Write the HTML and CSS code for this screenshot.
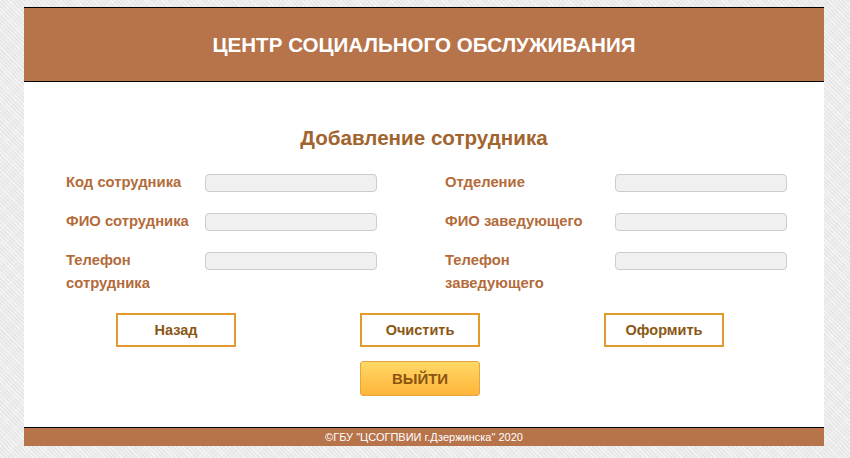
FILE: index.html
```html
<!DOCTYPE html>
<html lang="ru">
<head>
  <meta charset="UTF-8">
  <title>Добавление сотрудника</title>
  <link rel="stylesheet" href="styles.css">
</head>
<body>

<div class="page">
  <div class="header">ЦЕНТР СОЦИАЛЬНОГО ОБСЛУЖИВАНИЯ</div>

  <div class="content">
    <h2>Добавление сотрудника</h2>

    <form class="form" onsubmit="return false">
      <label for="code">Код сотрудника</label>
      <input type="text" id="code" />
      <label for="dept">Отделение</label>
      <input type="text" id="dept" />

      <label for="fio">ФИО сотрудника</label>
      <input type="text" id="fio" />
      <label for="head">ФИО заведующего</label>
      <input type="text" id="head" />

      <label for="phone">Телефон сотрудника</label>
      <input type="text" id="phone" />
      <label for="head-phone">Телефон заведующего</label>
      <input type="text" id="head-phone" />
    </form>

    <div class="buttons">
      <button class="btn">Назад</button>
      <button class="btn">Очистить</button>
      <button class="btn">Оформить</button>
      <button class="btn-exit">ВЫЙТИ</button>
    </div>
  </div>

  <div class="footer">©ГБУ "ЦСОГПВИИ г.Дзержинска" 2020</div>
</div>

</body>
</html>
```

FILE: styles.css
```css
body {
  margin: 0;
  font-family: Arial, "Liberation Sans", sans-serif;
  background-color: #ececec;
  background-image:
    repeating-linear-gradient(45deg, rgba(255,255,255,0.5) 0 1px, transparent 1px 3px),
    repeating-linear-gradient(-45deg, rgba(0,0,0,0.03) 0 1px, transparent 1px 2px);
}
.page {
  width: 800px;
  margin: 7px 0 0 24px;
  background: white;
}
.header {
  height: 73px;
  line-height: 73px;
  background: #b7734a;
  border-top: 1px solid #000;
  border-bottom: 1px solid #000;
  color: white;
  font-size: 20.6px;
  font-weight: bold;
  text-align: center;
}
.content {
  padding: 44px 0 31px;
}
h2 {
  margin: 0;
  text-align: center;
  font-size: 20.6px;
  line-height: 24px;
  color: #a2642e;
}
.form {
  display: grid;
  grid-template-columns: 139px 240px 170px 172px;
  row-gap: 16px;
  padding-left: 42px;
  margin-top: 21px;
  align-items: start;
}
.form label {
  font-size: 14.8px;
  font-weight: bold;
  line-height: 23px;
  color: #b36b3a;
  padding-right: 10px;
}
.form input {
  width: 172px;
  height: 18px;
  margin-top: 3px;
  box-sizing: border-box;
  background: #f0f0f0;
  border: 1px solid #cccccc;
  border-radius: 4px;
}
.buttons {
  display: grid;
  grid-template-columns: repeat(3, 244px);
  justify-items: center;
  row-gap: 14px;
  padding-left: 30px;
  margin-top: 18px;
}
.btn {
  width: 120px;
  height: 34px;
  background: white;
  border: 2px solid #e09a2e;
  font-family: inherit;
  font-size: 14.5px;
  font-weight: bold;
  color: #8b5714;
  cursor: pointer;
}
.btn-exit {
  grid-column: 2;
  width: 120px;
  height: 35px;
  background: linear-gradient(#ffd866, #ffb53a);
  border: 1px solid #e5a542;
  border-radius: 3px;
  font-family: inherit;
  font-size: 15px;
  font-weight: bold;
  color: #8b5410;
  cursor: pointer;
}
.footer {
  height: 18px;
  line-height: 18px;
  background: #b7734a;
  border-top: 1px solid #000;
  color: white;
  font-size: 11px;
  text-align: center;
}
```
